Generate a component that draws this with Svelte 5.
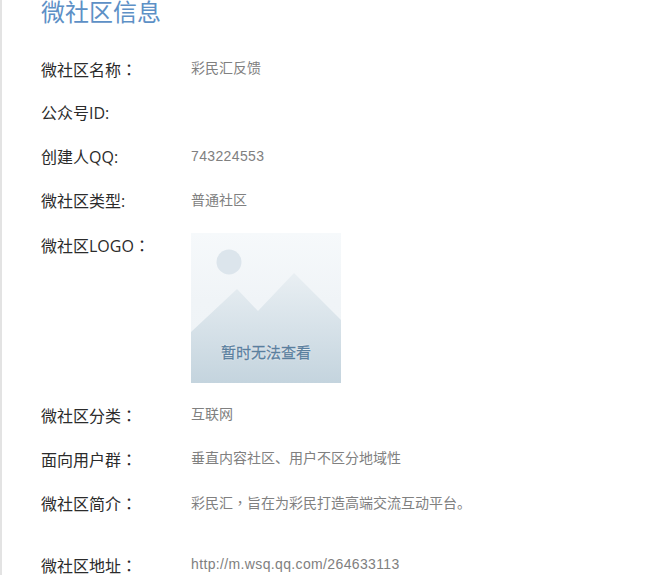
<script>
  const before = [
    { label: '微社区名称', colon: '：', value: '彩民汇反馈' },
    { label: '公众号ID', colon: ':', value: '' },
    { label: '创建人QQ', colon: ':', value: '743224553', latin: true },
    { label: '微社区类型', colon: ':', value: '普通社区' }
  ];
  const after = [
    { label: '微社区分类', value: '互联网' },
    { label: '面向用户群', value: '垂直内容社区、用户不区分地域性' }
  ];
</script>

<div class="page">
  <h1>微社区信息</h1>
  <div class="list">
    {#each before as r}
      <div class="row">
        <div class="label">{r.label}<span class:wide={r.colon === '：'}>{r.colon}</span></div>
        <div class="value" class:latin={r.latin}>{r.value}</div>
      </div>
    {/each}
    <div class="row">
      <div class="label">微社区LOGO<span class="wide">：</span></div>
      <div class="logo">
        <svg width="150" height="150" viewBox="0 0 150 150">
          <defs>
            <linearGradient id="bg" x1="0" y1="0" x2="0" y2="1">
              <stop offset="0" stop-color="#f6f9fb" />
              <stop offset="0.45" stop-color="#f0f4f7" />
              <stop offset="1" stop-color="#eef3f6" />
            </linearGradient>
            <linearGradient id="mt" x1="0" y1="0" x2="0" y2="1">
              <stop offset="0" stop-color="#e9eff3" />
              <stop offset="1" stop-color="#c4d4de" />
            </linearGradient>
          </defs>
          <rect width="150" height="150" fill="url(#bg)" />
          <circle cx="38" cy="29" r="12.5" fill="#dce5ec" />
          <path d="M0 99 L46 56 L67 78 L103 40 L150 87 V150 H0 Z" fill="url(#mt)" />
        </svg>
        <span class="logo-text">暂时无法查看</span>
      </div>
    </div>
    {#each after as r}
      <div class="row">
        <div class="label">{r.label}<span class="wide">：</span></div>
        <div class="value">{r.value}</div>
      </div>
    {/each}
    <div class="row">
      <div class="label">微社区简介<span class="wide">：</span></div>
      <div class="value">彩民汇<span class="wide">，</span>旨在为彩民打造高端交流互动平台。</div>
    </div>
    <div class="row last">
      <div class="label">微社区地址<span class="wide">：</span></div>
      <div class="value latin">http://m.wsq.qq.com/264633113</div>
    </div>
  </div>
</div>

<style>
  :global(body) {
    margin: 0;
    background: #fff;
    overflow: hidden;
  }
  .page {
    height: 575px;
    box-sizing: border-box;
    overflow: hidden;
    border-left: 2px solid #e3e3e3;
    padding-left: 39px;
    font-family: "Open Sans", "Noto Sans CJK SC", sans-serif;
  }
  h1 {
    margin: -6px 0 0;
    height: 36px;
    line-height: 36px;
    font-size: 24px;
    font-weight: 400;
    color: #5d90c6;
  }
  .list {
    display: flex;
    flex-direction: column;
    gap: 20px;
    margin-top: 27px;
  }
  .row {
    display: flex;
    align-items: flex-start;
  }
  .row.last {
    margin-top: 18px;
  }
  .label {
    width: 150px;
    flex: none;
    height: 24px;
    line-height: 25px;
    font-size: 16px;
    color: #2b2b2b;
  }
  .wide {
    font-family: "Noto Sans CJK TC", sans-serif;
  }
  .value {
    height: 24px;
    line-height: 22px;
    font-size: 14px;
    color: #808080;
  }
  .latin {
    font-family: "Liberation Sans", sans-serif;
    letter-spacing: 0.36px;
  }
  .logo {
    position: relative;
    width: 150px;
    height: 150px;
  }
  .logo svg {
    display: block;
  }
  .logo-text {
    position: absolute;
    left: 0;
    right: 0;
    top: 107px;
    text-align: center;
    font-size: 15px;
    line-height: 24px;
    color: #5a7f9e;
    text-shadow: 0 0 2px #fff, 0 0 1px #fff;
    -webkit-text-stroke: 0.3px #5a7f9e;
  }
</style>
